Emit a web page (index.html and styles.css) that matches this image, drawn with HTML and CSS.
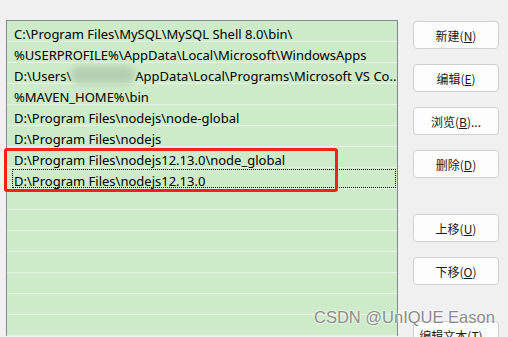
FILE: index.html
```html
<!DOCTYPE html>
<html lang="zh-CN">
<head>
  <meta charset="UTF-8" />
  <title>编辑环境变量</title>
  <link rel="stylesheet" href="styles.css">
</head>
<body>
  <div class="page">
    <div class="path-list">
      <div class="row">C:\Program Files\MySQL\MySQL Shell 8.0\bin\</div>
      <div class="row">%USERPROFILE%\AppData\Local\Microsoft\WindowsApps</div>
      <div class="row">D:\Users\<span class="blur"></span>AppData\Local\Programs\Microsoft VS Co...</div>
      <div class="row">%MAVEN_HOME%\bin</div>
      <div class="row">D:\Program Files\nodejs\node-global</div>
      <div class="row">D:\Program Files\nodejs</div>
      <div class="row">D:\Program Files\nodejs12.13.0\node_global</div>
      <div class="row focused">D:\Program Files\nodejs12.13.0</div>
      <div class="row"></div>
      <div class="row"></div>
      <div class="row"></div>
      <div class="row"></div>
      <div class="row"></div>
      <div class="row"></div>
      <div class="row"></div>
    </div>

    <div class="actions">
      <button>新建(<u>N</u>)</button>
      <button>编辑(<u>E</u>)</button>
      <button>浏览(<u>B</u>)...</button>
      <button>删除(<u>D</u>)</button>
      <button class="gap">上移(<u>U</u>)</button>
      <button>下移(<u>O</u>)</button>
      <button class="gap">编辑文本(<u>T</u>)...</button>
    </div>

    <div class="highlight"></div>
    <div class="watermark">CSDN @UnIQUE Eason</div>
  </div>
</body>
</html>
```

FILE: styles.css
```css
body {
  margin: 0;
  background: #f0f0f0;
  overflow: hidden;
  font-family: 'Noto Sans', 'Noto Sans CJK SC', sans-serif;
  color: #000;
}

.page {
  position: relative;
  display: flex;
  align-items: flex-start;
  padding: 20px 0 0 6px;
  height: 337px;
  box-sizing: border-box;
}

.path-list {
  width: 390px;
  border-left: 1px solid #828790;
  border-top: 1px solid #828790;
  border-right: 1px solid #828790;
  background: #cdebc8;
  flex-shrink: 0;
  overflow: hidden;
}

.row {
  position: relative;
  height: 17px;
  padding-top: 3px;
  line-height: 20px;
  border-bottom: 1px solid #e8f2e6;
  padding-left: 7px;
  font-size: 13px;
  white-space: nowrap;
}

.row.focused::after {
  content: '';
  position: absolute;
  left: 5px;
  right: 1px;
  top: 1px;
  bottom: 0;
  border: 1px dotted #000;
}

.blur {
  display: inline-block;
  width: 64px;
  height: 18px;
  vertical-align: -3px;
  background: #b5cfb2;
  border-radius: 9px;
  filter: blur(3px);
}

.actions {
  display: flex;
  flex-direction: column;
  gap: 15px;
  margin-left: 15px;
  margin-top: 1px;
}

.actions button {
  width: 86px;
  height: 28px;
  padding: 0;
  background: #fdfdfd;
  border: 1px solid #d0d0d0;
  border-radius: 4px;
  font-family: 'Noto Sans CJK SC', sans-serif;
  font-size: 12px;
  color: #1a1a1a;
}

.actions button.gap {
  margin-top: 21px;
}

.highlight {
  position: absolute;
  left: 4px;
  top: 148px;
  width: 328px;
  height: 38px;
  border: 3px solid #f5201a;
  border-radius: 3px;
}

.watermark {
  position: absolute;
  left: 314px;
  top: 308px;
  font-family: 'Liberation Sans', sans-serif;
  font-size: 16.5px;
  color: #8a8a8a;
  text-shadow: 0 0 2px #fff, 0 0 2px #fff;
}
```
